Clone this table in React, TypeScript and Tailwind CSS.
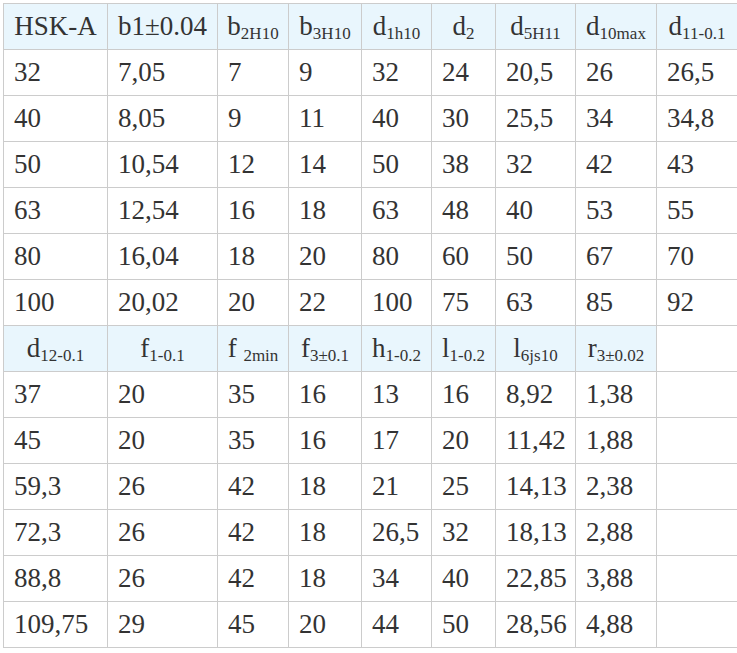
import React from 'react';

type Cell = React.ReactNode;

const S = ({ children }: { children: React.ReactNode }) => (
  <sub className="text-[17px] align-[-0.25em] relative bottom-0">{children}</sub>
);

const head1: Cell[] = [
  'HSK-A',
  'b1±0.04',
  <>b<S>2H10</S></>,
  <>b<S>3H10</S></>,
  <>d<S>1h10</S></>,
  <>d<S>2</S></>,
  <>d<S>5H11</S></>,
  <>d<S>10max</S></>,
  <>d<S>11-0.1</S></>,
];

const rows1 = [
  ['32', '7,05', '7', '9', '32', '24', '20,5', '26', '26,5'],
  ['40', '8,05', '9', '11', '40', '30', '25,5', '34', '34,8'],
  ['50', '10,54', '12', '14', '50', '38', '32', '42', '43'],
  ['63', '12,54', '16', '18', '63', '48', '40', '53', '55'],
  ['80', '16,04', '18', '20', '80', '60', '50', '67', '70'],
  ['100', '20,02', '20', '22', '100', '75', '63', '85', '92'],
];

const head2: Cell[] = [
  <>d<S>12-0.1</S></>,
  <>f<S>1-0.1</S></>,
  <>f <S>2min</S></>,
  <>f<S>3±0.1</S></>,
  <>h<S>1-0.2</S></>,
  <>l<S>1-0.2</S></>,
  <>l<S>6js10</S></>,
  <>r<S>3±0.02</S></>,
];

const rows2 = [
  ['37', '20', '35', '16', '13', '16', '8,92', '1,38'],
  ['45', '20', '35', '16', '17', '20', '11,42', '1,88'],
  ['59,3', '26', '42', '18', '21', '25', '14,13', '2,38'],
  ['72,3', '26', '42', '18', '26,5', '32', '18,13', '2,88'],
  ['88,8', '26', '42', '18', '34', '40', '22,85', '3,88'],
  ['109,75', '29', '45', '20', '44', '50', '28,56', '4,88'],
];

const widths = [104, 110, 71, 73, 70, 64, 80, 81, 81];

const th = 'border border-[#cccccc] bg-[#e9f6fd] h-[46px] p-0 text-center font-normal whitespace-nowrap';
const td = 'border border-[#cccccc] h-[46px] py-0 pl-[10px] pr-0 text-left whitespace-nowrap';

export default function App() {
  return (
    <div className="bg-white min-h-screen pt-[3px] pl-[3px] font-['Liberation_Serif','Times_New_Roman',serif]">
      <table className="table-fixed border-collapse text-[#333333] text-[27px] leading-none w-[734px] font-['Liberation_Serif','Times_New_Roman',serif]">
        <colgroup>
          {widths.map((w, i) => (
            <col key={i} style={{ width: w }} />
          ))}
        </colgroup>
        <tbody>
          <tr>
            {head1.map((c, i) => (
              <th key={i} className={th}>{c}</th>
            ))}
          </tr>
          {rows1.map((r, i) => (
            <tr key={i}>
              {r.map((c, j) => (
                <td key={j} className={td}>{c}</td>
              ))}
            </tr>
          ))}
          <tr>
            {head2.map((c, i) => (
              <th key={i} className={th}>{c}</th>
            ))}
            <td className="border border-[#cccccc] h-[46px] p-0"></td>
          </tr>
          {rows2.map((r, i) => (
            <tr key={i}>
              {r.map((c, j) => (
                <td key={j} className={td}>{c}</td>
              ))}
              <td className="border border-[#cccccc] h-[46px] p-0"></td>
            </tr>
          ))}
        </tbody>
      </table>
    </div>
  );
}
